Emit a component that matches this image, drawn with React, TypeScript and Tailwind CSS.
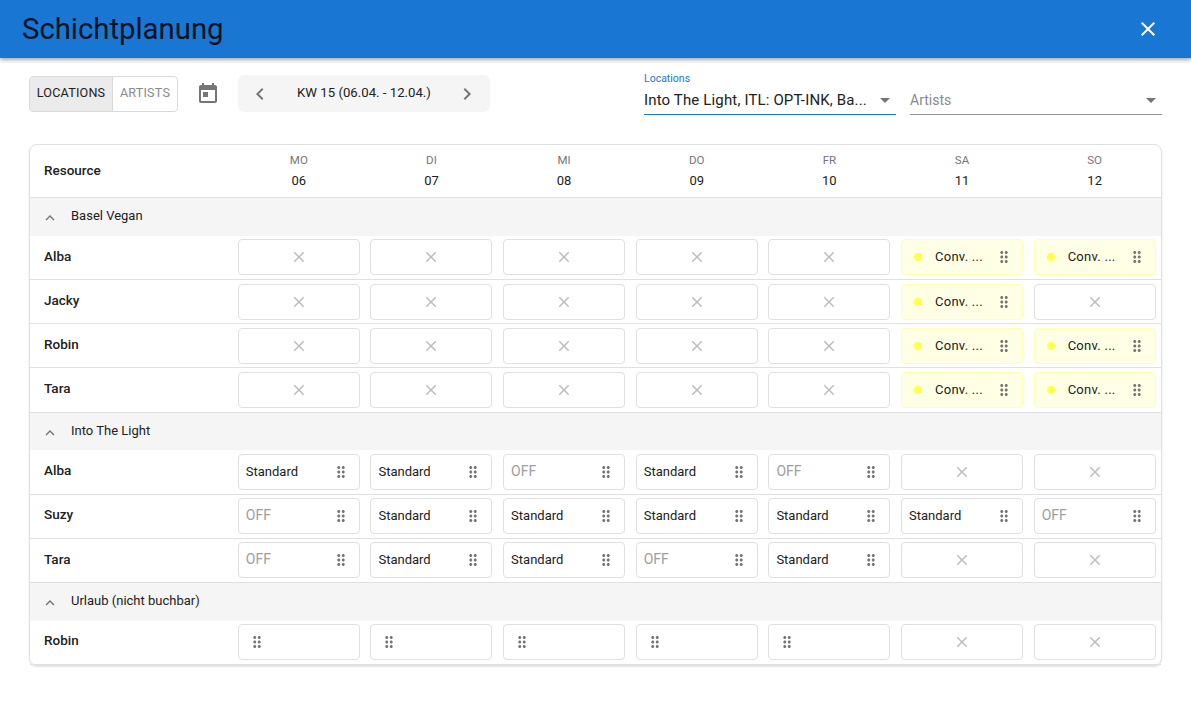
const P = {
  drag: "M11 18c0 1.1-.9 2-2 2s-2-.9-2-2 .9-2 2-2 2 .9 2 2zm-2-8c-1.1 0-2 .9-2 2s.9 2 2 2 2-.9 2-2-.9-2-2-2zm0-6c-1.1 0-2 .9-2 2s.9 2 2 2 2-.9 2-2-.9-2-2-2zm6 4c1.1 0 2-.9 2-2s-.9-2-2-2-2 .9-2 2 .9 2 2 2zm0 2c-1.1 0-2 .9-2 2s.9 2 2 2 2-.9 2-2-.9-2-2-2zm0 6c-1.1 0-2 .9-2 2s.9 2 2 2 2-.9 2-2-.9-2-2-2z",
  close: "M19 6.41L17.59 5 12 10.59 6.41 5 5 6.41 10.59 12 5 17.59 6.41 19 12 13.41 17.59 19 19 17.59 13.41 12z",
  today: "M19 3h-1V1h-2v2H8V1H6v2H5c-1.11 0-1.99.9-1.99 2L3 19c0 1.1.89 2 2 2h14c1.1 0 2-.9 2-2V5c0-1.1-.9-2-2-2zm0 16H5V8h14v11zM7 10h5v5H7z",
  up: "M12 8l-6 6 1.41 1.41L12 10.83l4.59 4.58L18 14z",
  left: "M15.41 7.41L14 6l-6 6 6 6 1.41-1.41L10.83 12z",
  right: "M10 6L8.59 7.41 13.17 12l-4.58 4.59L10 18l6-6z",
  down: "M7 10l5 5 5-5z",
};

function Icon({ d, className }: { d: string; className: string }) {
  return (
    <svg viewBox="0 0 24 24" fill="currentColor" className={className}>
      <path d={d} />
    </svg>
  );
}

type Cell = "x" | "c" | "s" | "o" | "d";

const Days = [
  ["MO", "06"], ["DI", "07"], ["MI", "08"], ["DO", "09"], ["FR", "10"], ["SA", "11"], ["SO", "12"],
];

const Groups: { name: string; h: string; rows: { name: string; pad: string; lead: string; cells: Cell[] }[] }[] = [
  {
    name: "Basel Vegan",
    h: "h-[38px]",
    rows: [
      { name: "Alba", pad: "pt-[3px] pb-1", lead: "leading-[35px]", cells: ["x", "x", "x", "x", "x", "c", "c"] },
      { name: "Jacky", pad: "pt-1 pb-[3px]", lead: "leading-[33px]", cells: ["x", "x", "x", "x", "x", "c", "x"] },
      { name: "Robin", pad: "pt-1 pb-[3px]", lead: "leading-[33px]", cells: ["x", "x", "x", "x", "x", "c", "c"] },
      { name: "Tara", pad: "pt-1 pb-1", lead: "leading-[33px]", cells: ["x", "x", "x", "x", "x", "c", "c"] },
    ],
  },
  {
    name: "Into The Light",
    h: "h-[37px]",
    rows: [
      { name: "Alba", pad: "pt-1 pb-1", lead: "leading-[33px]", cells: ["s", "s", "o", "s", "o", "x", "x"] },
      { name: "Suzy", pad: "pt-[3px] pb-1", lead: "leading-[33px]", cells: ["o", "s", "s", "s", "s", "s", "o"] },
      { name: "Tara", pad: "pt-[3px] pb-1", lead: "leading-[35px]", cells: ["o", "s", "s", "o", "s", "x", "x"] },
    ],
  },
  {
    name: "Urlaub (nicht buchbar)",
    h: "h-[38px]",
    rows: [{ name: "Robin", pad: "pt-[3px] pb-1", lead: "leading-[33px]", cells: ["d", "d", "d", "d", "d", "x", "x"] }],
  },
];

function Drag() {
  return <Icon d={P.drag} className="w-[18px] h-[18px] text-[#757575] shrink-0" />;
}

function ShiftCell({ kind }: { kind: Cell }) {
  const base = "w-[122px] h-9 rounded border flex items-center text-[13px] ";
  if (kind === "x") {
    return (
      <div className={base + "border-[#e0e0e0] bg-white justify-center"}>
        <Icon d={P.close} className="w-[18px] h-[18px] text-[#bdbdbd]" />
      </div>
    );
  }
  if (kind === "c") {
    return (
      <div className={base + "border-[#ffffb3] bg-[#ffffe5] pl-[12px] pr-[9px]"}>
        <span className="w-2 h-2 rounded-full bg-[#ffff4d] shrink-0" />
        <span className="ml-[13px] whitespace-nowrap text-[#212121] tracking-[0.25px] pb-px">Conv. ...</span>
        <span className="ml-auto"><Drag /></span>
      </div>
    );
  }
  if (kind === "d") {
    return (
      <div className={base + "border-[#e0e0e0] bg-white pl-[9px]"}>
        <Drag />
      </div>
    );
  }
  return (
    <div className={base + "border-[#e0e0e0] bg-white pl-[7px] pr-[9px] justify-between"}>
      <span className={kind === "o" ? "text-[#9e9e9e] text-[14px] pb-px" : "text-[#212121] pb-px"}>{kind === "o" ? "OFF" : "Standard"}</span>
      <Drag />
    </div>
  );
}

export default function App() {
  return (
    <div className="w-[1191px] h-[716px] bg-white overflow-hidden font-['Roboto',sans-serif] text-[#212121]">
      <header className="h-[58px] bg-[#1976d2] flex items-center justify-between pl-[22px] pr-[31px] shadow-[0_2px_4px_rgba(0,0,0,0.35)] relative">
        <h1 className="text-[29.3px] leading-none font-normal pt-[2px] text-[rgba(0,0,0,0.87)]">Schichtplanung</h1>
        <Icon d={P.close} className="w-6 h-6 text-white" />
      </header>

      <div className="flex items-start pl-[29px] pr-[29px] pt-[17px] h-[86px]">
        <div className="flex h-[36px] mt-px rounded border border-[#d9d9d9] text-[12.6px] tracking-[0.2px] overflow-hidden">
          <div className="w-[83px] bg-[#ebebeb] border-r border-[#d9d9d9] flex items-center justify-center pb-[2px]">LOCATIONS</div>
          <div className="w-[64px] flex items-center justify-center text-[#8a8a8a] pb-[2px]">ARTISTS</div>
        </div>
        <Icon d={P.today} className="w-6 h-6 ml-[18px] mt-[7px] text-[#757575]" />
        <div className="ml-[18px] w-[252px] h-[37px] bg-[#f5f5f5] rounded-md flex items-center justify-between pl-[10px] pr-[11px]">
          <Icon d={P.left} className="w-6 h-6 text-[#757575]" />
          <span className="text-[13.2px] pb-[2px] pl-px">KW 15 (06.04. - 12.04.)</span>
          <Icon d={P.right} className="w-6 h-6 text-[#757575]" />
        </div>
        <div className="ml-auto flex gap-[14px]">
          <div className="w-[252px] h-[40px] border-b border-[#1976d2] flex flex-col">
            <span className="text-[10.5px] leading-3 -mt-[2px] text-[#1976d2]">Locations</span>
            <div className="flex items-center justify-between mt-[3px]">
              <span className="text-[15px] tracking-[0.15px] leading-5 whitespace-nowrap">Into The Light, ITL: OPT-INK, Ba...</span>
              <Icon d={P.down} className="w-6 h-6 -mr-[1px] text-[#757575]" />
            </div>
          </div>
          <div className="w-[252px] h-[40px] border-b border-[#949494] flex flex-col">
            <div className="flex items-center justify-between mt-[13px]">
              <span className="text-[14px] leading-5 text-[#8a8a8a]">Artists</span>
              <Icon d={P.down} className="w-6 h-6 -mr-[1px] text-[#757575]" />
            </div>
          </div>
        </div>
      </div>

      <div className="mx-[29px] w-[1133px] rounded-lg border border-[#e0e0e0] shadow-[0_1px_2px_rgba(0,0,0,0.12)]">
        <div className="grid grid-cols-[202.5px_repeat(7,1fr)] h-[53px] border-b border-[#e0e0e0] items-center">
          <div className="pl-[14px] text-[13.5px] font-medium pb-[2px]">Resource</div>
          {Days.map(([d, n]) => (
            <div key={d} className="flex flex-col items-center">
              <span className="text-[11.5px] leading-[14px] text-[#757575]">{d}</span>
              <span className="text-[13px] leading-[16px] mt-[6px]">{n}</span>
            </div>
          ))}
        </div>
        {Groups.map((g) => (
          <div key={g.name}>
            <div className={g.h + " bg-[#f5f5f5] flex items-center pl-[11px] text-[13px] text-[#212121]"}>
              <Icon d={P.up} className="w-[18px] h-[18px] text-[#757575] mt-[2px]" />
              <span className="ml-3 pb-[2px]">{g.name}</span>
            </div>
            {g.rows.map((r) => (
              <div key={r.name} className={"grid grid-cols-[202.5px_repeat(7,1fr)] border-b border-[#e0e0e0] " + r.pad}>
                <div className={"pl-[14px] text-[13.5px] font-medium " + r.lead}>{r.name}</div>
                {r.cells.map((c, i) => (
                  <div key={i} className="flex justify-center">
                    <ShiftCell kind={c} />
                  </div>
                ))}
              </div>
            ))}
          </div>
        ))}
      </div>
    </div>
  );
}
